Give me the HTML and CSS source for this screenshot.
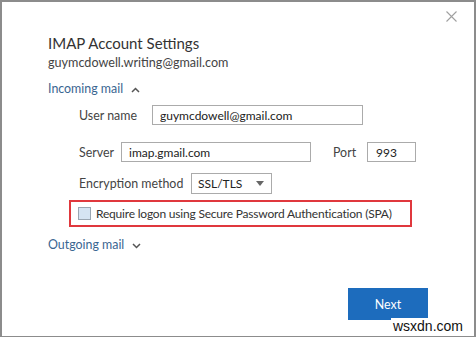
FILE: index.html
```html
<!DOCTYPE html>
<html lang="en">
<head>
    <meta charset="UTF-8">
    <title>IMAP Account Settings</title>
    <link rel="stylesheet" href="styles.css">
</head>
<body>
    <div class="dialog">
        <div class="top-bar">
            <button class="close-btn" aria-label="Close">
                <svg width="11" height="11" viewBox="0 0 11 11"><path d="M0.5 0.5 L10.5 10.5 M10.5 0.5 L0.5 10.5" stroke="#a0a0a0" stroke-width="1.1" fill="none"/></svg>
            </button>
        </div>

        <h1 class="title">IMAP Account Settings</h1>
        <div class="account">guymcdowell.writing@gmail.com</div>

        <div class="section-toggle">
            Incoming mail
            <svg class="chev" width="9" height="6" viewBox="0 0 9 6"><path d="M1 5 L4.5 1.5 L8 5" stroke="#555" stroke-width="1.5" fill="none"/></svg>
        </div>

        <div class="settings">
            <div class="row row-user">
                <label>User name</label>
                <input class="field field-user" type="text" value="guymcdowell@gmail.com">
            </div>
            <div class="row row-server">
                <label>Server</label>
                <input class="field field-server" type="text" value="imap.gmail.com">
                <label class="port-label">Port</label>
                <input class="field field-port" type="text" value="993">
            </div>
            <div class="row row-enc">
                <label>Encryption method</label>
                <div class="select">
                    <span>SSL/TLS</span>
                    <svg width="8" height="5" viewBox="0 0 8 5"><path d="M0 0 L8 0 L4 5 Z" fill="#666"/></svg>
                </div>
            </div>
        </div>

        <div class="spa-box">
            <span class="checkbox"></span>
            <span>Require logon using Secure Password Authentication (SPA)</span>
        </div>

        <div class="section-toggle outgoing">
            Outgoing mail
            <svg class="chev" width="9" height="6" viewBox="0 0 9 6"><path d="M1 1 L4.5 4.5 L8 1" stroke="#555" stroke-width="1.5" fill="none"/></svg>
        </div>

        <div class="footer">
            <button class="next-btn">Next</button>
        </div>
    </div>
    <div class="watermark">wsxdn.com</div>
</body>
</html>
```

FILE: styles.css
```css
body {
    margin: 0;
    padding: 0;
    width: 476px;
    height: 338px;
    background: #fff;
    font-family: 'Lato', 'Open Sans', sans-serif;
    color: #444;
    overflow: hidden;
    position: relative;
}

.dialog {
    box-sizing: border-box;
    width: 476px;
    height: 337px;
    border: 2px solid #8c8c8c;
    border-bottom-width: 1px;
    padding: 0 0 0 46px;
}

.top-bar {
    display: flex;
    justify-content: flex-end;
    height: 24px;
    padding-right: 17px;
}

.close-btn {
    border: none;
    background: none;
    padding: 0;
    margin-top: 8px;
    width: 11px;
    height: 11px;
}

.title {
    margin: 6px 0 0;
    font-weight: 400;
    font-size: 15px;
    line-height: 22px;
    color: #333;
}

.account {
    margin-top: 0;
    font-size: 12.6px;
    line-height: 18px;
    color: #444;
}

.section-toggle {
    margin-top: 8px;
    font-size: 12.4px;
    line-height: 18px;
    color: #3a6591;
    display: flex;
    align-items: center;
    gap: 8px;
}

.chev {
    margin-top: 1px;
}

.settings {
    padding-left: 31px;
}

.row {
    display: flex;
    align-items: center;
    font-size: 12.4px;
    color: #444;
}

.row label {
    white-space: nowrap;
}

.row-user {
    margin-top: 7px;
}

.row-user label {
    width: 73px;
}

.row-server {
    margin-top: 17px;
}

.row-server label {
    width: 42px;
}

.row-enc {
    margin-top: 11px;
}

.row-enc label {
    width: 112px;
}

.field {
    box-sizing: border-box;
    height: 20px;
    border: 1px solid #ababab;
    padding: 0 7px;
    font-family: inherit;
    font-size: 12px;
    color: #222;
    outline: none;
}

.field-user {
    width: 211px;
}

.field-server {
    width: 190px;
}

.row-server .port-label {
    width: auto;
    margin-left: 22px;
    margin-right: 11px;
}

.field-port {
    width: 49px;
    padding-left: 8px;
}

.select {
    box-sizing: border-box;
    width: 81px;
    height: 21px;
    border: 1px solid #ababab;
    display: flex;
    align-items: center;
    justify-content: space-between;
    padding: 0 7px 0 6px;
    font-size: 12px;
    color: #222;
}

.spa-box {
    box-sizing: border-box;
    width: 343px;
    height: 27px;
    margin: 6px 0 0 21px;
    border: 2px solid #e0383d;
    display: flex;
    align-items: center;
    padding-left: 7px;
    gap: 5px;
    font-size: 12px;
    letter-spacing: -0.2px;
    color: #333;
    white-space: nowrap;
}

.checkbox {
    box-sizing: border-box;
    flex: none;
    width: 13px;
    height: 13px;
    border: 1px solid #9aa6b2;
    background: #d5e4f3;
}

.outgoing {
    margin-top: 9px;
}

.footer {
    display: flex;
    justify-content: flex-end;
    padding-right: 46px;
    margin-top: 34px;
}

.next-btn {
    width: 80px;
    height: 32px;
    border: none;
    background: #1d6cbd;
    color: #fff;
    font-family: inherit;
    font-size: 12.4px;
}

.watermark {
    position: absolute;
    right: 11px;
    bottom: 4px;
    font-family: 'Liberation Sans', sans-serif;
    font-size: 14px;
    color: #111;
    background: #fff;
    padding: 0 2px;
}
```
